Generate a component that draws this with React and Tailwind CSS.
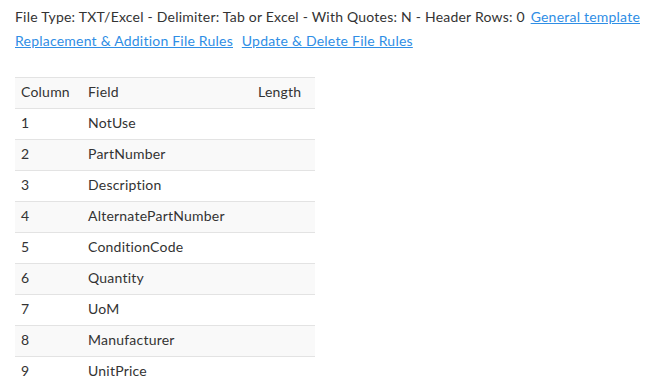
import React from 'react';

const fields = [
  'NotUse',
  'PartNumber',
  'Description',
  'AlternatePartNumber',
  'ConditionCode',
  'Quantity',
  'UoM',
  'Manufacturer',
  'UnitPrice',
];

const App = () => {
  return (
    <div className="min-h-screen bg-white pl-[15px] pt-[5px] text-[14px] leading-[24px] tracking-[0.22px] text-[#333333] font-['Lato','Noto_Sans',sans-serif]">
      <div className="whitespace-nowrap">
        File Type: TXT/Excel - Delimiter: Tab or Excel - With Quotes: N - Header Rows: 0{' '}
        <a href="#" className="ml-[2px] text-[#2f8ee5] underline">General template</a>
      </div>
      <div className="whitespace-nowrap">
        <a href="#" className="text-[#2f8ee5] underline">Replacement &amp; Addition File Rules</a>{' '}
        <a href="#" className="ml-[5px] text-[#2f8ee5] underline">Update &amp; Delete File Rules</a>
      </div>

      <table className="mt-[24px] w-[300px] border-collapse text-left">
        <thead>
          <tr className="h-[31px] border-t border-[#e3e3e3] bg-[#f9f9f9]">
            <th className="w-[67px] px-[6px] pb-[2px] font-normal">Column</th>
            <th className="w-[170px] px-[6px] pb-[2px] font-normal">Field</th>
            <th className="px-[6px] pb-[2px] font-normal">Length</th>
          </tr>
        </thead>
        <tbody>
          {fields.map((f, i) => (
            <tr
              key={f}
              className={`h-[31px] border-t border-[#e3e3e3] ${i % 2 === 1 ? 'bg-[#f9f9f9]' : 'bg-white'}`}
            >
              <td className="px-[6px] pb-[2px]">{i + 1}</td>
              <td className="px-[6px] pb-[2px]">{f}</td>
              <td className="px-[6px] pb-[2px]"></td>
            </tr>
          ))}
        </tbody>
      </table>
    </div>
  );
};

export default App;
